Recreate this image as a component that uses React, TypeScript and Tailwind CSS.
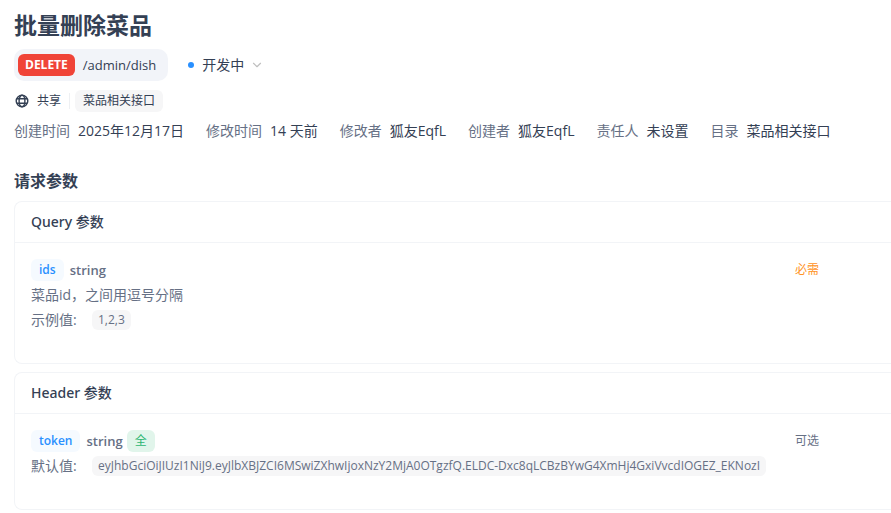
import React from 'react';
import { ChevronDown } from 'lucide-react';

interface MetaItem {
  label: string;
  value: string;
}

interface Param {
  name: string;
  type: string;
  badge?: string;
  required: boolean;
  description?: string;
  valueLabel: string;
  value: string;
}

const meta: MetaItem[] = [
  { label: '创建时间', value: '2025年12月17日' },
  { label: '修改时间', value: '14 天前' },
  { label: '修改者', value: '狐友EqfL' },
  { label: '创建者', value: '狐友EqfL' },
  { label: '责任人', value: '未设置' },
  { label: '目录', value: '菜品相关接口' },
];

const queryParams: Param[] = [
  {
    name: 'ids',
    type: 'string',
    required: true,
    description: '菜品id，之间用逗号分隔',
    valueLabel: '示例值:',
    value: '1,2,3',
  },
];

const headerParams: Param[] = [
  {
    name: 'token',
    type: 'string',
    badge: '全',
    required: false,
    valueLabel: '默认值:',
    value:
      'eyJhbGciOiJIUzI1NiJ9.eyJlbXBJZCI6MSwiZXhwIjoxNzY2MjA0OTgzfQ.ELDC-Dxc8qLCBzBYwG4XmHj4GxiVvcdIOGEZ_EKNozI',
  },
];

const GlobeIcon = () => (
  <svg viewBox="0 0 14 14" className="h-3.5 w-3.5" fill="none" stroke="currentColor" strokeWidth="1.4" aria-hidden="true">
    <circle cx="7" cy="7" r="5.8" />
    <ellipse cx="7" cy="7" rx="2.9" ry="5.8" />
    <path d="M1.8 4.7h10.4M1.8 9.3h10.4" />
  </svg>
);

const ParamRow: React.FC<{ param: Param }> = ({ param }) => (
  <div className="pt-4 pb-[31px] pl-4 pr-[72px] text-[#667085]">
    <div className="flex h-[22px] items-center">
      <span className="flex h-[22px] items-center rounded-md bg-[#f5faff] px-2 text-xs font-semibold text-[#2990ff]">
        {param.name}
      </span>
      <span className="ml-1.5 text-[13px] font-semibold">{param.type}</span>
      {param.badge && (
        <span className="ml-1 flex h-[22px] items-center rounded-md bg-[#e1f5eb] px-2 text-xs text-[#2bb673]">
          {param.badge}
        </span>
      )}
      {param.required ? (
        <span className="ml-auto text-xs text-[#ff9326]">必需</span>
      ) : (
        <span className="ml-auto text-xs">可选</span>
      )}
    </div>
    <div className="mt-px leading-[25px]">
      {param.description && <p>{param.description}</p>}
      <div className="flex items-center">
        <span className="w-[61px]">{param.valueLabel}</span>
        <span className="flex h-5 items-center rounded-md bg-[#f6f6f7] px-1.5 text-xs">{param.value}</span>
      </div>
    </div>
  </div>
);

const ParamCard: React.FC<{ title: string; params: Param[] }> = ({ title, params }) => (
  <section className="rounded-l-lg border border-r-0 border-[#f2f4f7]">
    <h3 className="flex h-[41px] items-center border-b border-[#f2f4f7] pl-4 font-['Noto_Sans','Noto_Sans_CJK_SC',sans-serif] font-medium">
      {title}
    </h3>
    {params.map((param) => (
      <ParamRow key={param.name} param={param} />
    ))}
  </section>
);

export default function App() {
  return (
    <main className="bg-white pt-[7px] pl-3.5 font-['Open_Sans','Noto_Sans_CJK_SC',sans-serif] text-sm text-[#344054]">
      <h1 className="text-[23px] leading-9 font-bold">批量删除菜品</h1>

      <div className="mt-1.5 flex items-center">
        <div className="flex h-8 items-center rounded-[10px] bg-[#f2f4f9] pr-3 pl-1">
          <span className="flex h-[22px] items-center rounded-md bg-[#f04438] px-[7px] text-xs font-bold text-white">
            DELETE
          </span>
          <span className="ml-2 text-[13px]">/admin/dish</span>
        </div>
        <button type="button" className="ml-5 flex items-center">
          <span className="h-1.5 w-1.5 rounded-full bg-[#2990ff]" />
          <span className="ml-2">开发中</span>
          <ChevronDown className="ml-1.5 h-3.5 w-3.5 text-[#bfbfbf]" />
        </button>
      </div>

      <div className="mt-[9px] flex h-[22px] items-center pl-px text-xs">
        <GlobeIcon />
        <span className="ml-2">共享</span>
        <span className="ml-2 h-4 w-px bg-[#eef0f3]" />
        <span className="ml-[5px] flex h-[22px] items-center rounded-md bg-[#f6f6f7] px-2">菜品相关接口</span>
      </div>

      <dl className="mt-2 flex flex-wrap gap-x-[22px] leading-[22px]">
        {meta.map((item) => (
          <div key={item.label} className="flex gap-2">
            <dt className="text-[#667085]">{item.label}</dt>
            <dd>{item.value}</dd>
          </div>
        ))}
      </dl>

      <h2 className="mt-[27px] text-base leading-6 font-bold">请求参数</h2>

      <div className="mt-2 flex flex-col gap-2">
        <ParamCard title="Query 参数" params={queryParams} />
        <ParamCard title="Header 参数" params={headerParams} />
      </div>
    </main>
  );
}
